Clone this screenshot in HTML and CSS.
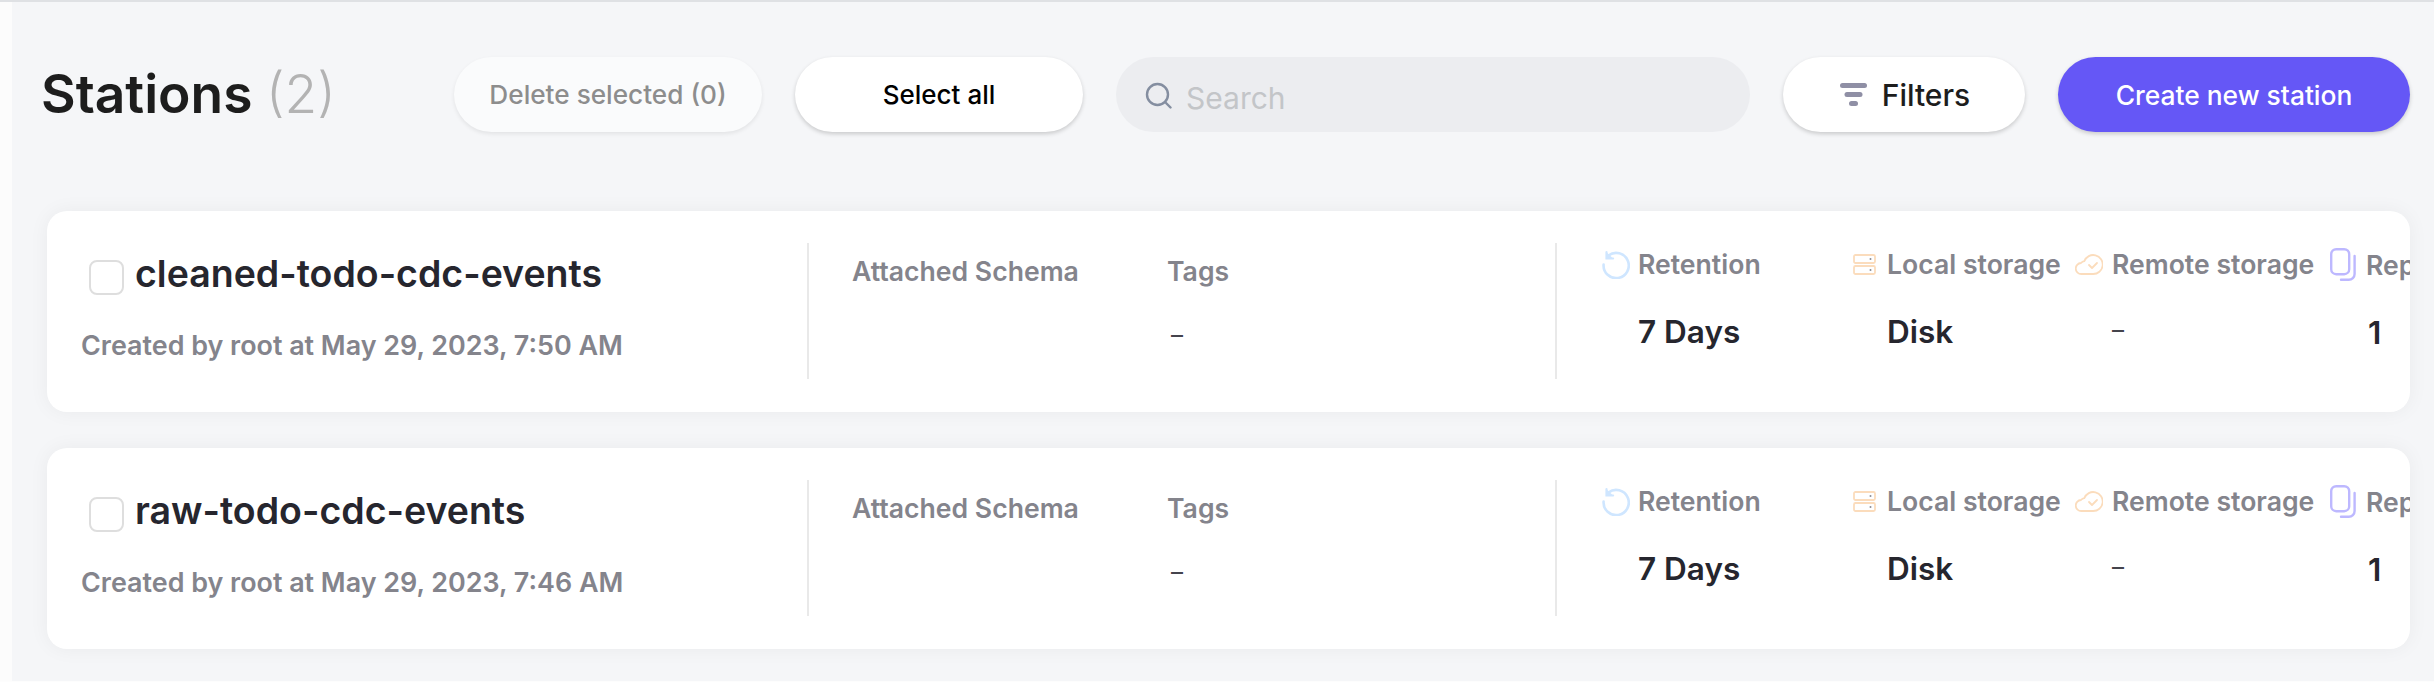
FILE: index.html
```html
<!DOCTYPE html>
<html lang="en">
<head>
<meta charset="utf-8">
<title>Stations</title>
<link rel="stylesheet" href="styles.css">
</head>
<body>
<div class="topline"></div>
<div class="shell">
  <div class="rail"></div>
  <main class="main">
    <header class="head">
      <h1 class="title">Stations <span class="count">(2)</span></h1>
      <button class="btn btn-delete">Delete selected (0)</button>
      <button class="btn btn-select">Select all</button>
      <div class="search">
        <svg class="search-icon" viewBox="0 0 27 27" width="27" height="27" fill="none" stroke="#848ea0" stroke-width="2.4" stroke-linecap="round"><circle cx="12.5" cy="12.5" r="10.5"/><path d="M20.5 20.5l5 5"/></svg>
        <span class="search-text">Search</span>
      </div>
      <button class="btn btn-filters">
        <svg viewBox="0 0 27 23" width="27" height="23" fill="#8f8fa5"><rect x="0" y="0" width="27" height="5" rx="2.5"/><rect x="4.5" y="9" width="18" height="5" rx="2.5"/><rect x="9" y="18" width="9" height="5" rx="2.5"/></svg>
        Filters
      </button>
      <button class="btn btn-create">Create new station</button>
    </header>

    <section class="card">
      <div class="identity">
        <div class="name-row"><span class="check"></span><span class="name">cleaned-todo-cdc-events</span></div>
        <div class="created">Created by root at May 29, 2023, 7:50 AM</div>
      </div>
      <div class="meta">
        <div class="meta-col schema"><div class="label">Attached Schema</div></div>
        <div class="meta-col"><div class="label">Tags</div><div class="dash dash-tags">–</div></div>
      </div>
      <div class="stats">
        <div class="stat stat-ret">
          <svg class="ic" viewBox="0 0 28 29" width="28" height="29" fill="none" stroke="#cfe6ff" stroke-width="2.6" stroke-linecap="round"><path d="M6.5 5.5A12.6 12.6 0 1 1 1.6 14.5"/><path d="M4.5 2.2v6.3h6.6" stroke-width="2.2" fill="#cfe6ff"/></svg>
          <div class="label">Retention</div><div></div><div class="value">7 Days</div>
        </div>
        <div class="stat stat-local">
          <svg class="ic" viewBox="0 0 23 21" width="23" height="21" fill="none" stroke="#fbdcbc" stroke-width="1.8"><rect x="1" y="1" width="21" height="8" rx="1.5"/><rect x="1" y="12" width="21" height="8" rx="1.5"/><circle cx="17.5" cy="5" r="1" fill="#8b8b93" stroke="none"/><circle cx="17.5" cy="16" r="1" fill="#8b8b93" stroke="none"/></svg>
          <div class="label">Local storage</div><div></div><div class="value">Disk</div>
        </div>
        <div class="stat stat-remote">
          <svg class="ic" viewBox="0 0 28 21" width="28" height="21" fill="none" stroke="#fbdcbc" stroke-width="1.8" stroke-linecap="round" stroke-linejoin="round"><path d="M18 20H6.5A5.5 5.5 0 0 1 6 9a6 6 0 0 1 3.3-1.8A9.5 9.5 0 1 1 18 20z"/><path d="M14 11l3 3 5-5"/></svg>
          <div class="label">Remote storage</div><div></div><div class="dash">–</div>
        </div>
        <div class="stat stat-rep">
          <svg class="ic" viewBox="0 0 26 33" width="26" height="33" fill="none" stroke="#bdb8ff" stroke-width="2.4" stroke-linecap="round"><rect x="1.2" y="1.2" width="18" height="25" rx="5"/><path d="M24.6 8v18a5.8 5.8 0 0 1-5.8 5.8H11"/></svg>
          <div class="label">Replicas</div><div></div><div class="value value-rep">1</div>
        </div>
      </div>
    </section>

    <section class="card">
      <div class="identity">
        <div class="name-row"><span class="check"></span><span class="name">raw-todo-cdc-events</span></div>
        <div class="created">Created by root at May 29, 2023, 7:46 AM</div>
      </div>
      <div class="meta">
        <div class="meta-col schema"><div class="label">Attached Schema</div></div>
        <div class="meta-col"><div class="label">Tags</div><div class="dash dash-tags">–</div></div>
      </div>
      <div class="stats">
        <div class="stat stat-ret">
          <svg class="ic" viewBox="0 0 28 29" width="28" height="29" fill="none" stroke="#cfe6ff" stroke-width="2.6" stroke-linecap="round"><path d="M6.5 5.5A12.6 12.6 0 1 1 1.6 14.5"/><path d="M4.5 2.2v6.3h6.6" stroke-width="2.2" fill="#cfe6ff"/></svg>
          <div class="label">Retention</div><div></div><div class="value">7 Days</div>
        </div>
        <div class="stat stat-local">
          <svg class="ic" viewBox="0 0 23 21" width="23" height="21" fill="none" stroke="#fbdcbc" stroke-width="1.8"><rect x="1" y="1" width="21" height="8" rx="1.5"/><rect x="1" y="12" width="21" height="8" rx="1.5"/><circle cx="17.5" cy="5" r="1" fill="#8b8b93" stroke="none"/><circle cx="17.5" cy="16" r="1" fill="#8b8b93" stroke="none"/></svg>
          <div class="label">Local storage</div><div></div><div class="value">Disk</div>
        </div>
        <div class="stat stat-remote">
          <svg class="ic" viewBox="0 0 28 21" width="28" height="21" fill="none" stroke="#fbdcbc" stroke-width="1.8" stroke-linecap="round" stroke-linejoin="round"><path d="M18 20H6.5A5.5 5.5 0 0 1 6 9a6 6 0 0 1 3.3-1.8A9.5 9.5 0 1 1 18 20z"/><path d="M14 11l3 3 5-5"/></svg>
          <div class="label">Remote storage</div><div></div><div class="dash">–</div>
        </div>
        <div class="stat stat-rep">
          <svg class="ic" viewBox="0 0 26 33" width="26" height="33" fill="none" stroke="#bdb8ff" stroke-width="2.4" stroke-linecap="round"><rect x="1.2" y="1.2" width="18" height="25" rx="5"/><path d="M24.6 8v18a5.8 5.8 0 0 1-5.8 5.8H11"/></svg>
          <div class="label">Replicas</div><div></div><div class="value value-rep">1</div>
        </div>
      </div>
    </section>
  </main>
</div>
</body>
</html>
```
FILE: styles.css
```css
* { box-sizing: border-box; }
html, body { margin: 0; height: 682px; overflow: hidden; background: #fdfdfd; }
body { font-family: Inter, "Liberation Sans", sans-serif; color: #1d1d1d; display: flex; flex-direction: column; }
.topline { height: 2px; background: #dfe1e4; flex: none; }
.shell { display: flex; height: 679px; flex: none; }
.rail { width: 12px; flex: none; background: #fcfcfc; }
.main { flex: 1; min-width: 0; background: #f5f6f8; padding: 55px 24px 0 35px; overflow: hidden; }

.head { display: flex; align-items: center; gap: 33px; height: 75px; margin-bottom: 79px; }
.title { margin: -3px -33px 0 -6px; width: 413px; flex: none; font-size: 53.3px; font-weight: 600; line-height: 75px; white-space: nowrap; }
.count { font-weight: 300; color: #b3b3b3; }

.btn { height: 75px; border: 0; border-radius: 38px; font-family: inherit; display: flex; align-items: center; justify-content: center; box-shadow: 0 2px 4px rgba(0, 0, 0, .18); padding: 0; flex: none; background: #fff; }
.btn-delete { width: 308px; font-size: 26.2px; font-weight: 500; color: #8d8d8d; background: #fafbfc; box-shadow: 0 2px 4px rgba(0, 0, 0, .08); }
.btn-select { width: 288px; font-size: 26px; font-weight: 500; color: #000; }
.btn-filters { width: 242px; padding-left: 2px; font-size: 30px; font-weight: 500; color: #1d1d1d; gap: 15px; }
.btn-create { width: 352px; font-size: 26.4px; font-weight: 500; color: #fff; background: #6557f6; }

.search { width: 634px; height: 75px; flex: none; background: #ecedf0; border-radius: 38px; display: flex; align-items: center; padding: 0 0 0 29px; gap: 14px; }
.search-text { font-size: 30px; font-weight: 400; color: #c3c5c8; margin-top: 7px; }
.search-icon { flex: none; margin-top: 2px; }

.card { display: flex; height: 201px; padding: 32px 0 33px; margin-bottom: 36px; background: #fff; border-radius: 20px; box-shadow: 0 0 20px rgba(0, 0, 0, .05); overflow: hidden; }
.identity { width: 760px; flex: none; padding: 0 0 0 34px; }
.name-row { display: flex; align-items: center; gap: 11px; padding-left: 8px; height: 50px; }
.check { width: 35px; height: 35px; flex: none; margin-top: 18px; border: 2px solid #dedede; border-radius: 8px; background: #fff; }
.name { font-size: 37.5px; font-weight: 600; color: #26262e; white-space: nowrap; line-height: 50px; margin-top: 11px; }
.created { margin-top: 34px; font-size: 26.9px; font-weight: 600; color: #84848c; white-space: nowrap; line-height: 36px; }

.meta { width: 748px; flex: none; display: flex; border-left: 2px solid #e9e9e9; padding-left: 43px; }
.meta-col { padding-top: 12px; }
.schema { width: 315px; flex: none; }
.label { font-size: 26.6px; font-weight: 600; color: #84848c; line-height: 32px; white-space: nowrap; }
.dash { font-size: 24px; line-height: 20px; color: #44444c; white-space: nowrap; }
.dash-tags { margin: 38px 0 0 4px; }

.stats { flex: 1; min-width: 0; display: flex; border-left: 2px solid #e9e9e9; padding: 5px 0 0 45px; }
.stat { display: grid; grid-template-columns: auto auto; align-content: start; justify-content: start; align-items: center; column-gap: 8px; flex: none; }
.stat-ret { width: 251px; }
.stat-local { width: 222px; column-gap: 11px; }
.stat-remote { width: 255px; column-gap: 9px; }
.stat-rep { width: 120px; column-gap: 10px; }
.ic { display: block; }
.value { font-size: 31.5px; font-weight: 600; color: #26262e; line-height: 40px; margin-top: 32px; white-space: nowrap; }
.value-rep { margin-left: 2px; }
.stat .dash { margin-top: 40px; height: 30px; }
```
